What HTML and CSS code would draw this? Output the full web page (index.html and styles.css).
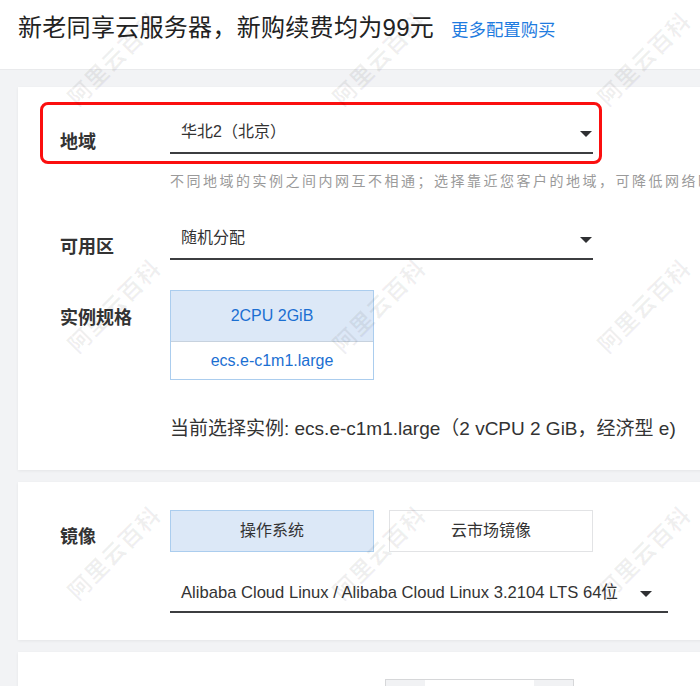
FILE: index.html
```html
<!DOCTYPE html>
<html lang="zh-CN">
<head>
<meta charset="utf-8">
<title>新老同享云服务器</title>
<link rel="stylesheet" href="styles.css">
</head>
<body>
<div class="page">
  <header class="header">
    <h1 class="title">新老同享云服务器，新购续费均为99元</h1>
    <a class="more" href="#">更多配置购买</a>
  </header>

  <main class="main">
    <section class="card card-1">
      <div class="highlight">
        <div class="label label-hl">地域</div>
        <div class="select select-region">华北2（北京）<span class="caret"></span></div>
      </div>
      <p class="help">不同地域的实例之间内网互不相通；选择靠近您客户的地域，可降低网络时延、提高您客户的访问速度。</p>

      <div class="row row-zone">
        <div class="label">可用区</div>
        <div class="select select-zone">随机分配<span class="caret"></span></div>
      </div>

      <div class="row row-spec">
        <div class="label label-spec">实例规格</div>
        <div class="spec">
          <div class="spec-top">2CPU 2GiB</div>
          <div class="spec-bottom">ecs.e-c1m1.large</div>
        </div>
      </div>

      <p class="current">当前选择实例: ecs.e-c1m1.large（2 vCPU 2 GiB，经济型 e)</p>
    </section>

    <section class="card card-2">
      <div class="row">
        <div class="label">镜像</div>
        <div class="tabs">
          <div class="tab tab-active">操作系统</div>
          <div class="tab">云市场镜像</div>
        </div>
      </div>
      <div class="select select-os">Alibaba Cloud Linux / Alibaba Cloud Linux 3.2104 LTS 64位<span class="caret caret-os"></span></div>
    </section>

    <section class="card card-3">
      <div class="stepper">
        <div class="step-btn"></div>
        <div class="step-val"></div>
        <div class="step-btn"></div>
      </div>
    </section>
  </main>

  <div class="watermarks" aria-hidden="true">
    <div class="wm-cell"><span class="wm">阿里云百科</span></div>
    <div class="wm-cell"><span class="wm">阿里云百科</span></div>
    <div class="wm-cell"><span class="wm">阿里云百科</span></div>
    <div class="wm-cell"><span class="wm">阿里云百科</span></div>
    <div class="wm-cell"><span class="wm">阿里云百科</span></div>
    <div class="wm-cell"><span class="wm">阿里云百科</span></div>
    <div class="wm-cell"><span class="wm">阿里云百科</span></div>
    <div class="wm-cell"><span class="wm">阿里云百科</span></div>
    <div class="wm-cell"><span class="wm">阿里云百科</span></div>
  </div>
</div>
</body>
</html>
```

FILE: styles.css
```css
html, body {
  margin: 0;
  padding: 0;
  height: 100%;
  overflow: hidden;
}

body {
  font-family: "Liberation Sans", "Noto Sans CJK SC", sans-serif;
  color: #333;
  background: #f2f3f5;
}

.page {
  position: relative;
  width: 700px;
  height: 686px;
  overflow: hidden;
}

/* header */
.header {
  box-sizing: border-box;
  height: 70px;
  padding: 10px 18px 0;
  background: #fff;
  border-bottom: 1px solid #e9eaec;
  display: flex;
  align-items: baseline;
  white-space: nowrap;
}

.title {
  margin: 0;
  font-size: 24px;
  font-weight: normal;
  line-height: 36px;
  letter-spacing: 0.3px;
  color: #222;
}

.more {
  margin-left: 17px;
  font-size: 17.4px;
  color: #1f7ce0;
  text-decoration: none;
}

/* main */
.main {
  padding: 17px 0 0 18px;
}

.card {
  width: 730px;
  box-sizing: border-box;
  background: #fff;
  box-shadow: 0 1px 3px rgba(0, 0, 0, 0.06);
  padding-left: 22px;
}

.card-1 {
  padding-top: 15px;
  padding-bottom: 28px;
}

.card-2 {
  margin-top: 12px;
  padding-top: 28px;
  padding-bottom: 27px;
}

.card-3 {
  margin-top: 12px;
  padding-top: 27px;
  height: 120px;
}

/* red highlight */
.highlight {
  box-sizing: border-box;
  width: 562px;
  display: flex;
  border: 3px solid #fb0f0f;
  border-radius: 8px;
  padding: 9px 6px 7px 17px;
}

.label {
  box-sizing: border-box;
  width: 130px;
  flex: none;
  padding-left: 20px;
  margin-top: 15px;
  font-size: 18px;
  line-height: 24px;
  font-weight: 600;
  color: #333;
  white-space: nowrap;
}

.label-hl {
  width: 110px;
  padding-left: 0;
  margin-top: 16px;
}

.label-spec {
  margin-top: 16px;
}

.select {
  position: relative;
  box-sizing: border-box;
  height: 40px;
  padding: 0 0 2px 11px;
  line-height: 36px;
  font-size: 16px;
  color: #333;
  border-bottom: 2px solid #3c3d40;
  white-space: nowrap;
}

.select-region {
  width: 423px;
}

.select-zone {
  width: 423px;
}

.caret {
  position: absolute;
  right: 1px;
  top: 17px;
  width: 0;
  height: 0;
  border-left: 6px solid transparent;
  border-right: 6px solid transparent;
  border-top: 6px solid #2f3033;
}

.help {
  margin: 7px 0 0 130px;
  font-size: 14px;
  line-height: 20px;
  letter-spacing: 2.5px;
  color: #9a9a9a;
  white-space: nowrap;
}

.row {
  display: flex;
  align-items: flex-start;
}

.row-zone {
  margin-top: 29px;
}

.row-spec {
  margin-top: 30px;
}

/* spec box */
.spec {
  width: 204px;
  box-sizing: border-box;
  border: 1px solid #abcdee;
  text-align: center;
  font-size: 16px;
  color: #1b6fd2;
}

.spec-top {
  height: 50px;
  line-height: 50px;
  background: #dce8f7;
  border-bottom: 1px solid #c7d2de;
}

.spec-bottom {
  height: 37px;
  line-height: 37px;
  background: #fff;
}

.current {
  margin: 36px 0 0 130px;
  font-size: 19px;
  line-height: 26px;
  color: #333;
  white-space: nowrap;
}

/* image tabs */
.tabs {
  display: flex;
  gap: 15px;
}

.tab {
  box-sizing: border-box;
  width: 204px;
  height: 42px;
  line-height: 40px;
  text-align: center;
  font-size: 16px;
  color: #333;
  background: #fff;
  border: 1px solid #e2e3e5;
}

.tab-active {
  background: #dce8f7;
  border-color: #abcdee;
}

.select-os {
  width: 498px;
  margin: 21px 0 0 130px;
  padding-top: 2px;
  padding-bottom: 0;
  font-size: 16.6px;
}

.caret-os {
  right: 16px;
  top: 18px;
}

/* stepper */
.stepper {
  display: flex;
  width: 189px;
  height: 34px;
  margin-left: 345px;
  box-sizing: border-box;
  border: 1px solid #d6d7d9;
}

.step-btn {
  width: 39px;
  background: #f1f2f4;
}

.step-val {
  flex: 1;
  background: #fff;
}

/* watermarks */
.watermarks {
  position: absolute;
  left: -20px;
  top: -66px;
  display: grid;
  grid-template-columns: repeat(3, 265px);
  grid-template-rows: repeat(3, 247px);
  pointer-events: none;
}

.wm-cell {
  display: flex;
  align-items: center;
  justify-content: center;
}

.wm {
  display: block;
  transform: rotate(-45deg);
  font-family: "Noto Sans CJK SC", sans-serif;
  font-size: 23px;
  font-weight: 700;
  letter-spacing: 1px;
  color: rgba(0, 0, 0, 0.06);
  white-space: nowrap;
}
```
